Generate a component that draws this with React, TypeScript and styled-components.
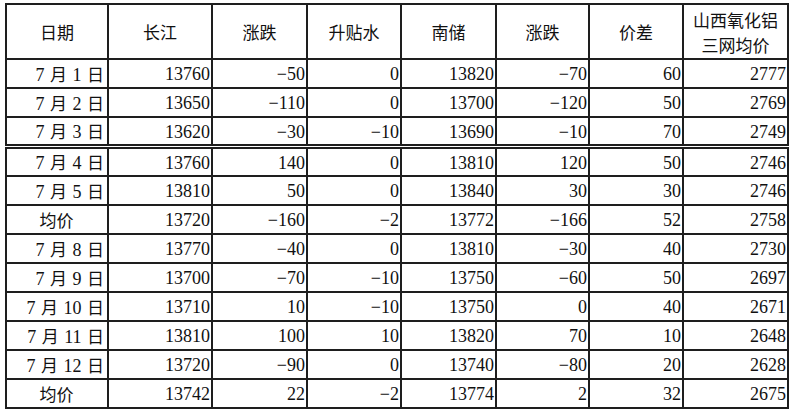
import { createGlobalStyle } from 'styled-components';
import styled from 'styled-components';

const GlobalStyle = createGlobalStyle`
  html, body {
    margin: 0;
    padding: 0;
    background: #ffffff;
  }
`;

const Page = styled.main`
  padding: 3px 0 0 5px;
`;

const Table = styled.table`
  border-collapse: collapse;
  table-layout: fixed;
  color: #111111;
  font-family: "Liberation Serif", "Noto Sans CJK SC", serif;
  font-size: 18px;
`;

const HeadCell = styled.th<{ $width: number }>`
  width: ${({ $width }) => $width}px;
  height: 53px;
  padding: 0;
  border: 2px solid #1e1e1e;
  font-family: "Noto Sans CJK SC", sans-serif;
  font-size: 17px;
  font-weight: 400;
  line-height: 25px;
  text-align: center;
  vertical-align: middle;
`;

const Row = styled.tr<{ $split?: boolean }>`
  height: 29px;

  td {
    border-top: ${({ $split }) => ($split ? '5px double #1e1e1e' : '2px solid #1e1e1e')};
  }
`;

const Cell = styled.td<{ $center?: boolean; $date?: boolean }>`
  padding: 1px ${({ $date }) => ($date ? 3 : 1)}px 0 0;
  border: 2px solid #1e1e1e;
  text-align: ${({ $center }) => ($center ? 'center' : 'right')};
  white-space: nowrap;
  line-height: 24px;
  word-spacing: ${({ $date }) => ($date ? 1 : 0)}px;
`;

const Han = styled.span`
  font-family: "Noto Sans CJK SC", sans-serif;
  font-size: 17px;
`;

const columns = [
  { label: '日期', width: 100 },
  { label: '长江', width: 102 },
  { label: '涨跌', width: 93 },
  { label: '升贴水', width: 92 },
  { label: '南储', width: 93 },
  { label: '涨跌', width: 91 },
  { label: '价差', width: 92 },
  { label: '山西氧化铝\n三网均价', width: 103 },
];

type Line = { day?: number; values: number[]; split?: boolean };

const rows: Line[] = [
  { day: 1, values: [13760, -50, 0, 13820, -70, 60, 2777] },
  { day: 2, values: [13650, -110, 0, 13700, -120, 50, 2769] },
  { day: 3, values: [13620, -30, -10, 13690, -10, 70, 2749] },
  { day: 4, values: [13760, 140, 0, 13810, 120, 50, 2746], split: true },
  { day: 5, values: [13810, 50, 0, 13840, 30, 30, 2746] },
  { values: [13720, -160, -2, 13772, -166, 52, 2758] },
  { day: 8, values: [13770, -40, 0, 13810, -30, 40, 2730] },
  { day: 9, values: [13700, -70, -10, 13750, -60, 50, 2697] },
  { day: 10, values: [13710, 10, -10, 13750, 0, 40, 2671] },
  { day: 11, values: [13810, 100, 10, 13820, 70, 10, 2648] },
  { day: 12, values: [13720, -90, 0, 13740, -80, 20, 2628] },
  { values: [13742, 22, -2, 13774, 2, 32, 2675] },
];

function formatValue(value: number) {
  return value < 0 ? `−${Math.abs(value)}` : String(value);
}

export default function App() {
  return (
    <Page>
      <GlobalStyle />
      <Table>
        <thead>
          <tr>
            {columns.map((col, i) => (
              <HeadCell key={i} $width={col.width}>
                {col.label.split('\n').map((part, j) => (
                  <div key={j}>{part}</div>
                ))}
              </HeadCell>
            ))}
          </tr>
        </thead>
        <tbody>
          {rows.map((row, i) => (
            <Row key={i} $split={row.split}>
              {row.day ? (
                <Cell $date>
                  7 <Han>月</Han> {row.day} <Han>日</Han>
                </Cell>
              ) : (
                <Cell $center>
                  <Han>均价</Han>
                </Cell>
              )}
              {row.values.map((v, j) => (
                <Cell key={j}>{formatValue(v)}</Cell>
              ))}
            </Row>
          ))}
        </tbody>
      </Table>
    </Page>
  );
}
